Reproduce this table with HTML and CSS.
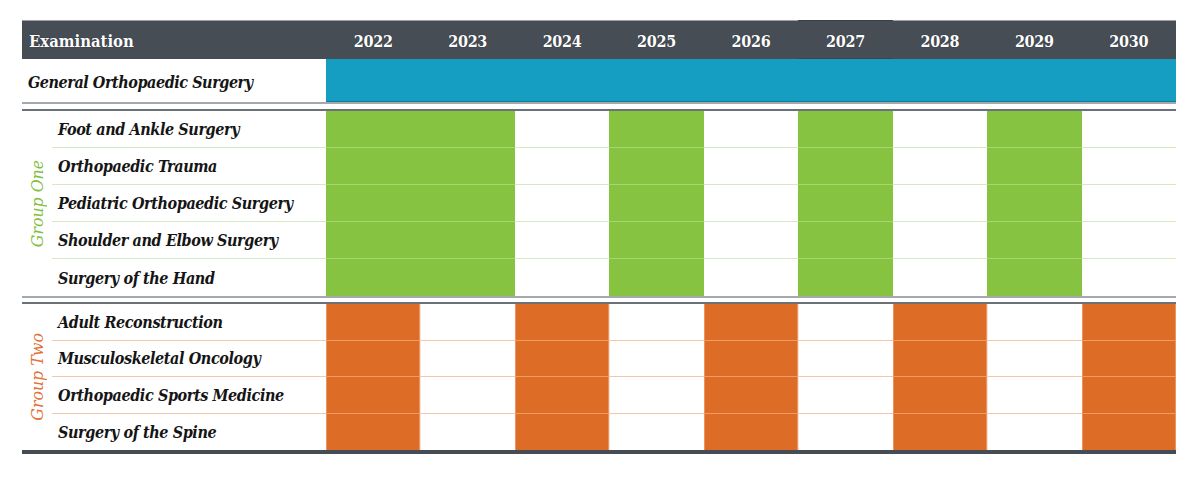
FILE: index.html
```html
<!DOCTYPE html>
<html lang="en">
<head>
<meta charset="utf-8">
<title>Examination schedule</title>
<link rel="stylesheet" href="styles.css">
</head>
<body>
<div class="chart">
  <div class="head">
    <div class="hc first">Examination</div>
    <div class="hc">2022</div>
    <div class="hc">2023</div>
    <div class="hc">2024</div>
    <div class="hc">2025</div>
    <div class="hc">2026</div>
    <div class="hc hl">2027</div>
    <div class="hc">2028</div>
    <div class="hc">2029</div>
    <div class="hc">2030</div>
  </div>

  <div class="general">
    <div class="gname">General Orthopaedic Surgery</div>
    <div class="bluebar"></div>
  </div>

  <div class="group one">
    <div class="glabel"><span>Group One</span></div>
    <div class="row">
      <div class="name">Foot and Ankle Surgery</div>
      <div class="c g"></div><div class="c g"></div><div class="c"></div><div class="c g"></div><div class="c"></div><div class="c g"></div><div class="c"></div><div class="c g"></div><div class="c"></div>
    </div>
    <div class="row">
      <div class="name">Orthopaedic Trauma</div>
      <div class="c g"></div><div class="c g"></div><div class="c"></div><div class="c g"></div><div class="c"></div><div class="c g"></div><div class="c"></div><div class="c g"></div><div class="c"></div>
    </div>
    <div class="row">
      <div class="name">Pediatric Orthopaedic Surgery</div>
      <div class="c g"></div><div class="c g"></div><div class="c"></div><div class="c g"></div><div class="c"></div><div class="c g"></div><div class="c"></div><div class="c g"></div><div class="c"></div>
    </div>
    <div class="row">
      <div class="name">Shoulder and Elbow Surgery</div>
      <div class="c g"></div><div class="c g"></div><div class="c"></div><div class="c g"></div><div class="c"></div><div class="c g"></div><div class="c"></div><div class="c g"></div><div class="c"></div>
    </div>
    <div class="row">
      <div class="name">Surgery of the Hand</div>
      <div class="c g"></div><div class="c g"></div><div class="c"></div><div class="c g"></div><div class="c"></div><div class="c g"></div><div class="c"></div><div class="c g"></div><div class="c"></div>
    </div>
  </div>

  <div class="group two">
    <div class="glabel"><span>Group Two</span></div>
    <div class="row">
      <div class="name">Adult Reconstruction</div>
      <div class="c o"></div><div class="c"></div><div class="c o"></div><div class="c"></div><div class="c o"></div><div class="c"></div><div class="c o"></div><div class="c"></div><div class="c o"></div>
    </div>
    <div class="row">
      <div class="name">Musculoskeletal Oncology</div>
      <div class="c o"></div><div class="c"></div><div class="c o"></div><div class="c"></div><div class="c o"></div><div class="c"></div><div class="c o"></div><div class="c"></div><div class="c o"></div>
    </div>
    <div class="row">
      <div class="name">Orthopaedic Sports Medicine</div>
      <div class="c o"></div><div class="c"></div><div class="c o"></div><div class="c"></div><div class="c o"></div><div class="c"></div><div class="c o"></div><div class="c"></div><div class="c o"></div>
    </div>
    <div class="row">
      <div class="name">Surgery of the Spine</div>
      <div class="c o"></div><div class="c"></div><div class="c o"></div><div class="c"></div><div class="c o"></div><div class="c"></div><div class="c o"></div><div class="c"></div><div class="c o"></div>
    </div>
  </div>
</div>
</body>
</html>
```

FILE: styles.css
```css
* { box-sizing: border-box; }

body {
  margin: 0;
  background: #ffffff;
  font-family: "DejaVu Serif Condensed", "DejaVu Serif", serif;
}

.chart {
  width: 1154px;
  margin: 20px 0 0 22px;
}

/* header */
.head {
  display: grid;
  grid-template-columns: 304px repeat(9, 1fr);
  height: 39px;
  background: #474d55;
}

.hc {
  border-top: 1px solid #9da1a6;
  color: #ffffff;
  font-weight: bold;
  font-size: 16px;
  letter-spacing: -0.3px;
  padding-top: 2px;
  display: flex;
  align-items: center;
  justify-content: center;
  text-shadow: 0 0 1px rgba(0, 0, 0, 0.6);
}

.hc.first {
  justify-content: flex-start;
  padding-left: 7px;
  font-size: 16.5px;
  letter-spacing: 0;
}

.hc.hl {
  border-top-color: #3b4148;
  box-shadow: inset 0 -1px 0 #3f454c;
}

/* general row */
.general {
  display: grid;
  grid-template-columns: 304px 1fr;
  height: 45px;
  border-bottom: 2px solid #a6a9ac;
}

.gname {
  display: flex;
  align-items: center;
  padding-left: 6px;
  padding-top: 3px;
  font-size: 16px;
  letter-spacing: -0.45px;
  font-weight: bold;
  font-style: italic;
  color: #151515;
}

.bluebar {
  background: #159dc2;
  border-bottom: 1px solid #0f7d9d;
}

/* groups */
.group {
  display: grid;
  grid-template-columns: 30px 274px repeat(9, 1fr);
  margin-top: 5px;
  border-top: 2px solid #6b7178;
}

.group.one {
  grid-template-rows: repeat(5, 37px);
  border-bottom: 2px solid #a6a9ac;
}

.group.two {
  margin-top: 4px;
  grid-template-rows: repeat(4, 36.5px);
  border-bottom: 4px solid #454c54;
}

.row { display: contents; }

.glabel {
  grid-column: 1;
  grid-row: 1 / -1;
  display: flex;
  align-items: center;
  justify-content: center;
}

.glabel span {
  writing-mode: vertical-rl;
  transform: rotate(180deg);
  font-style: italic;
  font-size: 17.5px;
  white-space: nowrap;
}

.one .glabel span { color: #7fc041; }
.two .glabel span { color: #e2713a; }

.name {
  display: flex;
  align-items: center;
  padding-left: 6px;
  padding-top: 1px;
  font-size: 16px;
  letter-spacing: -0.4px;
  font-weight: bold;
  font-style: italic;
  color: #151515;
  white-space: nowrap;
}

.one .name, .one .c { border-bottom: 1px solid #d6eac2; }
.two .name, .two .c { border-bottom: 1px solid #f4c7a8; }

.c.g {
  background: #86c341;
  border-bottom-color: #a6d572;
}

.c.o {
  background: #dd6d26;
  border-bottom-color: #ee9c66;
  border-left: 1px solid #ec9460;
  border-right: 1px solid #ec9460;
}

.two .c:not(.o) {
  border-left: 1px solid #fbe3d6;
}

.row:last-child > .name,
.row:last-child > .c {
  border-bottom: none;
}
```
